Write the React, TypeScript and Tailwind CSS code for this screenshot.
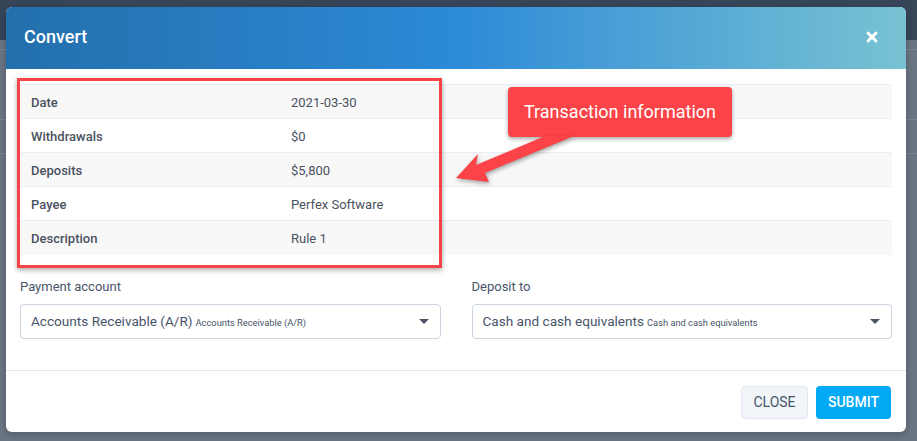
import { X } from "lucide-react";

const rows = [
  { label: "Date", value: "2021-03-30" },
  { label: "Withdrawals", value: "$0" },
  { label: "Deposits", value: "$5,800" },
  { label: "Payee", value: "Perfex Software" },
  { label: "Description", value: "Rule 1" },
];

const Caret = () => (
  <svg width="10" height="6" viewBox="0 0 10 6" className="shrink-0">
    <path d="M0 0 L10 0 L5 5 Z" fill="#4b5563" />
  </svg>
);

const SelectBox = ({ main, sub }: { main: string; sub: string }) => (
  <div className="flex h-[35px] items-center justify-between rounded-[4px] border border-[#cbd5e1] bg-white pl-[10px] pr-[11px]">
    <div className="flex items-baseline gap-[3px] text-[#475569]">
      <span className="text-[13.6px]">{main}</span>
      <span className="text-[9.3px]">{sub}</span>
    </div>
    <Caret />
  </div>
);

export default function App() {
  return (
    <div
      className="relative h-[441px] w-[917px] overflow-hidden bg-[#6b7684]"
      style={{ fontFamily: "Roboto, 'Liberation Sans', sans-serif" }}
    >
      {/* page behind the overlay */}
      <div className="h-[40px] bg-[#38465a]" />
      <div className="h-[10px] border-b border-[#7a8592]" />
      <div className="h-[70px] border-b border-[#7a8592]" />
      <div className="h-[34px] border-b border-[#7a8592]" />

      {/* modal */}
      <div className="absolute left-[6px] top-[7px] w-[900px] overflow-hidden rounded-[6px] bg-white shadow-[0_2px_8px_rgba(0,0,0,0.25)]">
        <div className="flex h-[62px] items-center justify-between bg-gradient-to-r from-[#236fac] via-[#2c8ad7] to-[#77c2d2] pb-[3px] pl-[18px] pr-[26px]">
          <h2 className="text-[18px] font-medium text-white">Convert</h2>
          <X size={16} strokeWidth={4.5} className="text-white" />
        </div>

        <div className="px-[14px] pt-[15px]">
          <div className="border-t border-[#e6eef7]">
            {rows.map((r, i) => (
              <div
                key={r.label}
                className={`flex h-[34px] items-center border-b border-[#e6eef7] pt-[2px] text-[13px] ${
                  i % 2 === 0 ? "bg-[#f8f8f8]" : "bg-white"
                } ${i === rows.length - 1 ? "border-b-0" : ""}`}
              >
                <div className="w-[271px] pl-[11px] font-medium text-[#4a5260]">{r.label}</div>
                <div className="text-[#4a5260]">{r.value}</div>
              </div>
            ))}
          </div>

          <div className="mt-[22px] grid grid-cols-2 gap-x-[31px]">
            <div>
              <div className="mb-[7px] h-[20px] text-[13px] leading-[20px] text-[#475569]">Payment account</div>
              <SelectBox main="Accounts Receivable (A/R)" sub="Accounts Receivable (A/R)" />
            </div>
            <div>
              <div className="mb-[7px] h-[20px] text-[13px] leading-[20px] text-[#475569]">Deposit to</div>
              <SelectBox main="Cash and cash equivalents" sub="Cash and cash equivalents" />
            </div>
          </div>
        </div>

        <div className="mt-[31px] flex justify-end gap-[8px] border-t border-[#e5e7eb] pb-[13px] pl-[14px] pr-[15px] pt-[15px]">
          <button className="h-[33px] w-[67px] rounded-[4px] border border-[#e2e8f0] bg-[#f1f5f9] text-[14px] text-[#475569]">
            CLOSE
          </button>
          <button className="h-[33px] w-[75px] rounded-[4px] bg-[#03a9f4] text-[14px] font-medium text-white">
            SUBMIT
          </button>
        </div>
      </div>

      {/* annotation: red frame */}
      <div className="absolute left-[17px] top-[78px] h-[190px] w-[425px] border-[3px] border-[#f44449] shadow-[0_2px_5px_rgba(0,0,0,0.35)]" />

      {/* annotation: callout */}
      <div className="absolute left-[508px] top-[87px] flex h-[50px] w-[224px] items-center justify-center rounded-[4px] bg-[#fc4347] pb-[2px] text-[18px] text-white shadow-[0_2px_4px_rgba(0,0,0,0.35)]">
        Transaction information
      </div>
      <svg
        className="absolute left-0 top-0"
        width="917"
        height="441"
        style={{ filter: "drop-shadow(1px 2px 2px rgba(0,0,0,0.35))" }}
      >
        <polygon
          points="456,178 478,154 476,165 545,136 574,136 485,173 489,182"
          fill="#fc4347"
        />
      </svg>
    </div>
  );
}
